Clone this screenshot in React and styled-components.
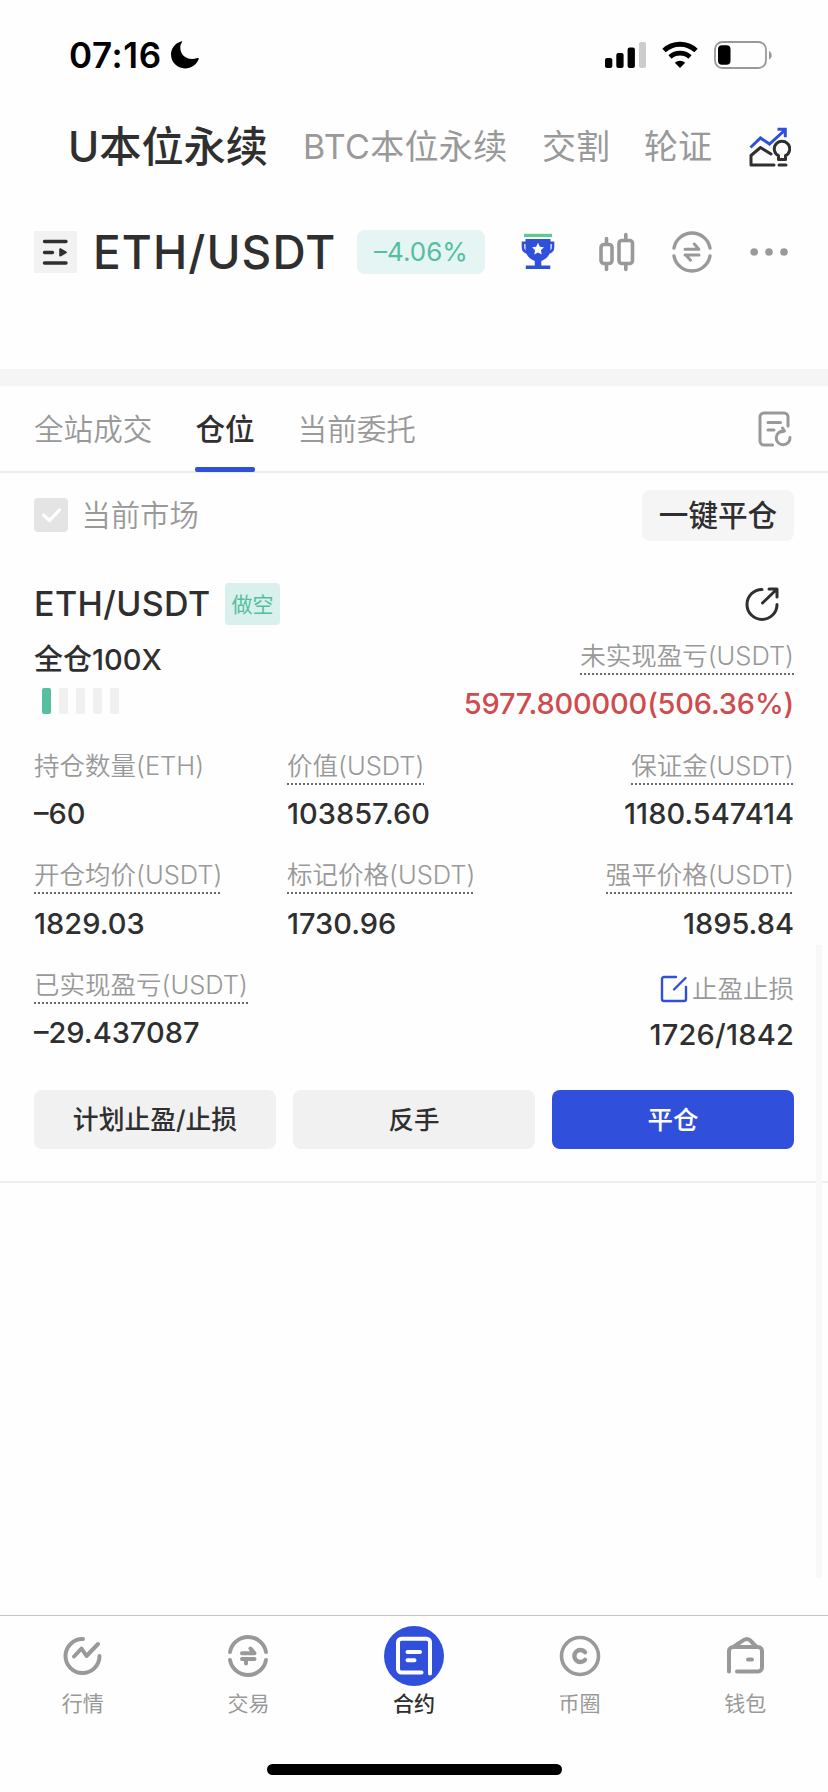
import React from "react";
import styled, { createGlobalStyle } from "styled-components";

const GlobalStyle = createGlobalStyle`
  * { box-sizing: border-box; }
  body { margin: 0; background: #fefefe; }
`;

const Screen = styled.div`
  position: relative;
  width: 828px;
  height: 1792px;
  display: flex;
  flex-direction: column;
  background: #fefefe;
  color: #2f2f2f;
  font-family: Inter, "Noto Sans CJK SC", sans-serif;
  overflow: hidden;
  white-space: nowrap;
  svg { display: block; flex: none; }
`;

const Label = styled.span`
  display: inline-block;
  font-size: ${(p) => p.$size}px;
  line-height: ${(p) => p.$size + 6}px;
  font-weight: ${(p) => p.$weight || 400};
  letter-spacing: ${(p) => p.$track || 0}px;
  color: ${(p) => p.$color || "inherit"};
`;

const StatusBar = styled.header`
  display: flex;
  align-items: center;
  height: 110px;
  padding: 0 55px 0 69px;
`;
const Time = styled.div`
  flex: 1;
  display: flex;
  align-items: center;
  gap: 9px;
  color: #000;
`;
const StatusIcons = styled.div`
  display: flex;
  align-items: center;
  gap: 16px;
`;

const MarketTabs = styled.nav`
  display: flex;
  align-items: center;
  height: 74px;
  padding: 0 37px 0 68px;
`;
const MarketTab = styled.div`
  width: ${(p) => p.$width}px;
`;

const PairBar = styled.div`
  display: flex;
  align-items: center;
  height: 185px;
  padding: 0 39px 50px 34px;
`;
const ListButton = styled.div`
  width: 43px;
  height: 42px;
  background: #f2f2f2;
`;
const PairName = styled.div`
  width: 264px;
  margin-left: 16px;
`;
const Change = styled.div`
  display: flex;
  align-items: center;
  justify-content: center;
  width: 128px;
  height: 44px;
  border-radius: 8px;
  background: #e4f5f3;
`;
const PairActions = styled.div`
  flex: 1;
  display: flex;
  align-items: center;
  padding-left: 36px;
  gap: 37px;
`;
const TrophySlot = styled.div`
  margin-right: 7px;
`;

const Band = styled.div`
  height: 17px;
  background: #f5f5f5;
`;

const Tabs = styled.div`
  display: flex;
  height: 87px;
  padding: 0 36px 0 34px;
  gap: 43px;
  border-bottom: 2px solid #ececec;
`;
const Tab = styled.div`
  position: relative;
  display: flex;
  align-items: center;
  height: 86px;
  padding-top: 1px;
  &::after {
    content: "";
    display: ${(p) => (p.$active ? "block" : "none")};
    position: absolute;
    left: 0;
    right: 0;
    bottom: 0;
    height: 5px;
    border-radius: 2px;
    background: #3050dc;
  }
`;
const TabIcon = styled.div`
  display: flex;
  align-items: center;
  height: 86px;
  margin-left: auto;
`;

const FilterRow = styled.div`
  display: flex;
  align-items: center;
  height: 84px;
  padding: 0 34px;
`;
const Checkbox = styled.div`
  width: 34px;
  height: 34px;
  margin-right: 13.5px;
  border-radius: 4px;
  background: #e4e4e4;
`;
const FilterText = styled.div`
  padding-top: 2px;
`;
const CloseAll = styled.button`
  display: flex;
  align-items: center;
  justify-content: center;
  width: 152px;
  height: 51px;
  margin-left: auto;
  padding: 2px 0 0;
  border: 0;
  border-radius: 8px;
  background: #f5f5f5;
  color: #2f2f2f;
  font-family: inherit;
`;

const Card = styled.section`
  display: flex;
  flex-direction: column;
  height: 626px;
  padding: 22px 34px 32px;
  border-bottom: 2px solid #eeeeee;
`;
const CardHead = styled.div`
  display: flex;
  align-items: center;
  height: 50px;
`;
const CardPair = styled.div`
  width: 191px;
`;
const Side = styled.div`
  display: flex;
  align-items: center;
  justify-content: center;
  width: 55px;
  height: 42px;
  border-radius: 4px;
  background: #d9f0ed;
`;
const ShareSlot = styled.div`
  margin-left: auto;
  padding-right: 15px;
`;
const Summary = styled.div`
  display: flex;
  justify-content: space-between;
  height: 110px;
`;
const Leverage = styled.div`
  padding-top: 13px;
`;
const Meter = styled.div`
  display: flex;
  gap: 8px;
  padding: 11px 0 0 8px;
`;
const MeterBar = styled.div`
  width: 9px;
  height: 26px;
  border-radius: 2px;
  background: ${(p) => (p.$on ? "#55bf9f" : "#f0f0f0")};
`;

const Metrics = styled.div`
  display: grid;
  grid-template-columns: 253px 1fr 1fr;
  grid-auto-rows: 109.67px;
`;
const Metric = styled.div`
  display: flex;
  flex-direction: column;
  align-items: ${(p) => (p.$right ? "flex-end" : "flex-start")};
  padding-top: ${(p) => (p.$low ? 13.5 : 9.5)}px;
  gap: ${(p) => (p.$low ? 9 : 11)}px;
`;
const Caption = styled.div`
  display: flex;
  align-items: center;
  gap: 4px;
  height: 36px;
  padding-bottom: 2px;
  background: ${(p) =>
    p.$plain
      ? "none"
      : "repeating-linear-gradient(90deg, #6b6b6b 0 2px, transparent 2px 4px) left bottom / 100% 2px no-repeat"};
`;
const Value = styled.div`
  display: flex;
  align-items: center;
  height: 36px;
`;

const Actions = styled.div`
  display: flex;
  gap: 17px;
  margin-top: auto;
`;
const Action = styled.button`
  flex: 1;
  height: 59px;
  padding: 0;
  border: 0;
  border-radius: 8px;
  background: ${(p) => (p.$primary ? "#3050dc" : "#f1f1f1")};
  color: ${(p) => (p.$primary ? "#fff" : "#2f2f2f")};
  font-family: inherit;
`;

const ScrollThumb = styled.div`
  position: absolute;
  top: 945px;
  right: 6px;
  width: 6px;
  height: 633px;
  background: #f8f8f8;
`;

const BottomBar = styled.footer`
  display: flex;
  flex-direction: column;
  align-items: center;
  justify-content: space-between;
  height: 177px;
  margin-top: auto;
  padding-bottom: 17px;
  border-top: 1px solid #c4c4c4;
`;
const NavItems = styled.div`
  display: flex;
  width: 100%;
`;
const NavItem = styled.div`
  flex: 1;
  display: flex;
  flex-direction: column;
  align-items: center;
  padding-top: 10px;
  gap: 4px;
  color: ${(p) => (p.$active ? "#2f2f2f" : "#999")};
`;
const NavIcon = styled.div`
  display: flex;
  align-items: center;
  justify-content: center;
  width: 60px;
  height: 60px;
  border-radius: 50%;
  background: ${(p) => (p.$active ? "#3050dc" : "transparent")};
`;
const HomeIndicator = styled.div`
  width: 295px;
  height: 11px;
  border-radius: 6px;
  background: #000;
`;

const line = { fill: "none", strokeLinecap: "round", strokeLinejoin: "round" };

const Moon = () => (
  <svg width="28" height="28" viewBox="0 0 28 28">
    <path d="M10.500.3C3.800 2.200 0 7.800 0 13.600c0 7.800 6.200 13.800 14 13.800 6 0 11.200-3.300 13.700-9.200.4-1-.3-1.500-1.200-1.200-2 .7-3.700 1-5.600 1C14 18 9.300 13.300 9.300 6.600c0-2 .5-3.700 1.700-5.300.5-.7.2-1.200-.5-1z" />
  </svg>
);
const Signal = () => (
  <svg width="41" height="28" viewBox="0 0 41 28">
    <rect x="0" y="17" width="7.300" height="10" rx="2" />
    <rect x="11.300" y="12" width="7.300" height="15" rx="2" />
    <rect x="22.600" y="6.500" width="7.300" height="20.500" rx="2" />
    <rect x="34" y="1" width="7" height="26" rx="2" fill="#cccccc" />
  </svg>
);
const Wifi = () => (
  <svg width="36" height="28" viewBox="0 0 36 28" fill="none" stroke="#000">
    <path d="M2 9.500a23.500 23.500 0 0 1 32 0" strokeWidth="5" />
    <path d="M8 16a15 15 0 0 1 20 0" strokeWidth="4.800" />
    <path d="M18 27l-5.200-5.200a7.600 7.600 0 0 1 10.400 0z" fill="#000" stroke="none" />
  </svg>
);
const Battery = () => (
  <svg width="59" height="28" viewBox="0 0 59 28">
    <rect x="1" y="1" width="51" height="26" rx="7.500" fill="none" stroke="#999" strokeWidth="1.800" />
    <rect x="4" y="4.200" width="12.500" height="19.600" rx="4" />
    <path d="M55 10v8.500c3.600-1.200 3.600-7.300 0-8.500z" fill="#999" />
  </svg>
);
const Insight = () => (
  <svg width="42" height="40" viewBox="0 0 42 40" {...line} strokeWidth="3">
    <path d="M1.500 20.500l10-9.500 9 6L36 3M28.500 2.200h7.800v8" stroke="#3050dc" strokeLinecap="butt" strokeLinejoin="miter" />
    <path d="M25 38H2V28.500l9.500-8L22 27" stroke="#2f2f2f" />
    <path d="M29.500 32.500v-3.800a7.700 7.700 0 1 1 7 0v3.800zM30 38h7" stroke="#2f2f2f" />
  </svg>
);
const ListIcon = () => (
  <svg width="43" height="42" viewBox="0 0 43 42" {...line} stroke="#2f2f2f" strokeWidth="3.400">
    <path d="M10.500 10.500h21.500M10.500 21.500h8M10.500 32h21.500" />
    <path d="M26.200 18.200v6.400l5.600-3.200z" fill="#2f2f2f" strokeWidth="2" />
  </svg>
);
const Trophy = () => (
  <svg width="34" height="40" viewBox="0 0 34 40">
    <rect x="3" y="1.800" width="28" height="3.200" fill="#5ec990" />
    <path d="M4.500 7h25v10c0 6-4 10-9.200 12v4.500h9V37H4.800v-3.500h9V29C8.500 27 4.500 23 4.500 17z" fill="#3050dc" />
    <path d="M5 10.800H2v4.500c0 3 1 4.300 4 5.200M29 10.800h3v4.500c0 3-1 4.300-4 5.200" fill="none" stroke="#3050dc" strokeWidth="2.600" />
    <path d="M17 10.800l1.800 4 4.200.5-3.100 2.900.8 4.300-3.700-2.100-3.700 2.100.8-4.300-3.100-2.900 4.200-.5z" fill="#fff" />
  </svg>
);
const Candles = () => (
  <svg width="36" height="40" viewBox="0 0 36 40" {...line} stroke="#999" strokeWidth="3.600">
    <rect x="2" y="12.500" width="11" height="19" rx="3" />
    <rect x="20" y="8.500" width="13.500" height="23" rx="3" />
    <path d="M7.500 6.500v5M7.500 33v4.500M26.800 2.500v5M26.800 33v4.500" />
  </svg>
);
const Swap = ({ heavy }) => (
  <svg width="40" height="42" viewBox="0 0 40 42" {...line} stroke="#999" strokeWidth={heavy ? 4 : 3.400}>
    <path d="M2 17a18.300 18.300 0 0 1 36 0M2 25a18.300 18.300 0 0 0 36 0" />
    <path d={heavy ? "M14 18.200h12.500l-4-4.600M26.500 24H14M18 28.400V24" : "M13 18.200h13.800l-4.500-5.200M27 24H13M18.500 29.200L13.800 24"} strokeWidth={heavy ? 4 : 3} />
  </svg>
);
const Dots = () => (
  <svg width="40" height="10" viewBox="0 0 40 10" fill="#999">
    <circle cx="5.200" cy="5" r="3.800" />
    <circle cx="20" cy="5" r="3.800" />
    <circle cx="35" cy="5" r="3.800" />
  </svg>
);
const History = () => (
  <svg width="34" height="36" viewBox="0 0 34 36" {...line} stroke="#999" strokeWidth="3">
    <path d="M14.500 34H6a4 4 0 0 1-4-4V6a4 4 0 0 1 4-4h20a4 4 0 0 1 4 4v9" />
    <path d="M10 11.500h12.500M10 19h6" />
    <path d="M32 26.500a6.900 6.900 0 1 1-6.500-6.500M24.500 17l2 3-3.500 1" />
  </svg>
);
const Check = () => (
  <svg width="34" height="34" viewBox="0 0 34 34" {...line} stroke="#fff" strokeWidth="3.200">
    <path d="M9.500 17l6 5.500L25.500 12" />
  </svg>
);
const Share = () => (
  <svg width="34" height="36" viewBox="0 0 34 36" {...line} stroke="#2f2f2f" strokeWidth="3">
    <path d="M17 3.400a15 15 0 1 0 15 15M17.500 17L31 4M24 3h8v8" />
  </svg>
);
const Edit = () => (
  <svg width="28" height="28" viewBox="0 0 28 28" {...line} stroke="#3050dc" strokeWidth="2.400">
    <path d="M16 2H4a2 2 0 0 0-2 2v20a2 2 0 0 0 2 2h20a2 2 0 0 0 2-2V12M14 14.500L25.500 3" />
  </svg>
);
const Quotes = () => (
  <svg width="40" height="42" viewBox="0 0 40 42" {...line} stroke="#999" strokeWidth="4">
    <path d="M20 4A17 17 0 1 0 36.500 21M11 21.500l7.500-8 5 7.500L35 9" />
  </svg>
);
const Contract = () => (
  <svg width="40" height="42" viewBox="0 0 40 42" {...line} stroke="#fff" strokeWidth="4">
    <path d="M27.500 37.500H7.500a3.500 3.500 0 0 1-3.500-3.500V7.200a3.500 3.500 0 0 1 3.500-3.500h25a3.500 3.500 0 0 1 3.500 3.500V38.500M13.500 17h12.500M13.500 25.200h7" />
  </svg>
);
const Coin = () => (
  <svg width="42" height="42" viewBox="0 0 42 42" {...line} stroke="#999">
    <circle cx="21" cy="21" r="18.500" strokeWidth="3.600" />
    <path d="M26 17.200a6 6 0 1 0 0 7.600" strokeWidth="4.400" />
  </svg>
);
const Wallet = () => (
  <svg width="38" height="40" viewBox="0 0 38 40" {...line} stroke="#999" strokeWidth="4">
    <path d="M3 35.500V15a4 4 0 0 1 4-4h25a4 4 0 0 1 4 4v16.500a4 4 0 0 1-4 4H11M8 10.500l9.500-6.300c2.500-1.600 4.500-1.600 6.500 0l6 6.300M22 23.500h4" />
  </svg>
);

const gray = "#999";

const Stat = ({ label, value, right, plain, color, low, icon, track = 0 }) => (
  <Metric $right={right} $low={low}>
    <Caption $plain={plain}>
      {icon}
      <Label $size={25.5} $weight={350} $color={gray}>{label}</Label>
    </Caption>
    <Value>
      <Label $size={29} $weight={500} $color={color} $track={track}>{value}</Label>
    </Value>
  </Metric>
);

const nav = [
  ["行情", <Quotes key="i" />],
  ["交易", <Swap key="i" heavy />],
  ["合约", <Contract key="i" />],
  ["币圈", <Coin key="i" />],
  ["钱包", <Wallet key="i" />],
];

export default function App() {
  return (
    <Screen>
      <GlobalStyle />
      <StatusBar>
        <Time>
          <Label $size={35} $weight={600} $track={0.6}>07:16</Label>
          <Moon />
        </Time>
        <StatusIcons>
          <Signal />
          <Wifi />
          <Battery />
        </StatusIcons>
      </StatusBar>

      <MarketTabs>
        <MarketTab $width={235}><Label $size={42.2} $weight={500}>U本位永续</Label></MarketTab>
        <MarketTab $width={239}><Label $size={34} $color={gray} $track={0.35}>BTC本位永续</Label></MarketTab>
        <MarketTab $width={102}><Label $size={34} $color={gray}>交割</Label></MarketTab>
        <MarketTab $width={105}><Label $size={34} $color={gray}>轮证</Label></MarketTab>
        <Insight />
      </MarketTabs>

      <PairBar>
        <ListButton><ListIcon /></ListButton>
        <PairName><Label $size={46} $weight={500} $track={1.1}>ETH/USDT</Label></PairName>
        <Change><Label $size={26} $color="#54bf9f">–4.06%</Label></Change>
        <PairActions>
          <TrophySlot><Trophy /></TrophySlot>
          <Candles />
          <Swap />
          <Dots />
        </PairActions>
      </PairBar>

      <Band />

      <Tabs>
        <Tab><Label $size={29.6} $weight={350} $color={gray}>全站成交</Label></Tab>
        <Tab $active><Label $size={29.6} $weight={500}>仓位</Label></Tab>
        <Tab><Label $size={29.6} $weight={350} $color={gray}>当前委托</Label></Tab>
        <TabIcon><History /></TabIcon>
      </Tabs>

      <FilterRow>
        <Checkbox><Check /></Checkbox>
        <FilterText><Label $size={29.3} $weight={350} $color={gray}>当前市场</Label></FilterText>
        <CloseAll><Label $size={29.6} $weight={500}>一键平仓</Label></CloseAll>
      </FilterRow>

      <Card>
        <CardHead>
          <CardPair><Label $size={34} $weight={500} $track={0.4}>ETH/USDT</Label></CardPair>
          <Side><Label $size={21} $color="#54bf9f">做空</Label></Side>
          <ShareSlot><Share /></ShareSlot>
        </CardHead>
        <Summary>
          <Leverage>
            <Label $size={29} $weight={500}>全仓100X</Label>
            <Meter>
              {[1, 0, 0, 0, 0].map((on, i) => <MeterBar key={i} $on={on} />)}
            </Meter>
          </Leverage>
          <Stat right label="未实现盈亏(USDT)" value="5977.800000(506.36%)" color="#cf4b4d" track={-0.2} />
        </Summary>
        <Metrics>
          <Stat plain label="持仓数量(ETH)" value="–60" />
          <Stat label="价值(USDT)" value="103857.60" />
          <Stat right label="保证金(USDT)" value="1180.547414" />
          <Stat label="开仓均价(USDT)" value="1829.03" />
          <Stat label="标记价格(USDT)" value="1730.96" />
          <Stat right label="强平价格(USDT)" value="1895.84" />
          <Stat label="已实现盈亏(USDT)" value="–29.437087" />
          <div />
          <Stat right plain low icon={<Edit />} label="止盈止损" value="1726/1842" track={0.2} />
        </Metrics>
        <Actions>
          <Action><Label $size={25.8} $weight={500}>计划止盈/止损</Label></Action>
          <Action><Label $size={25.5} $weight={500}>反手</Label></Action>
          <Action $primary><Label $size={25.5} $weight={500}>平仓</Label></Action>
        </Actions>
      </Card>

      <BottomBar>
        <NavItems>
          {nav.map(([name, icon], i) => (
            <NavItem key={name} $active={i === 2}>
              <NavIcon $active={i === 2}>{icon}</NavIcon>
              <Label $size={21} $weight={i === 2 ? 500 : 400}>{name}</Label>
            </NavItem>
          ))}
        </NavItems>
        <HomeIndicator />
      </BottomBar>
      <ScrollThumb />
    </Screen>
  );
}
